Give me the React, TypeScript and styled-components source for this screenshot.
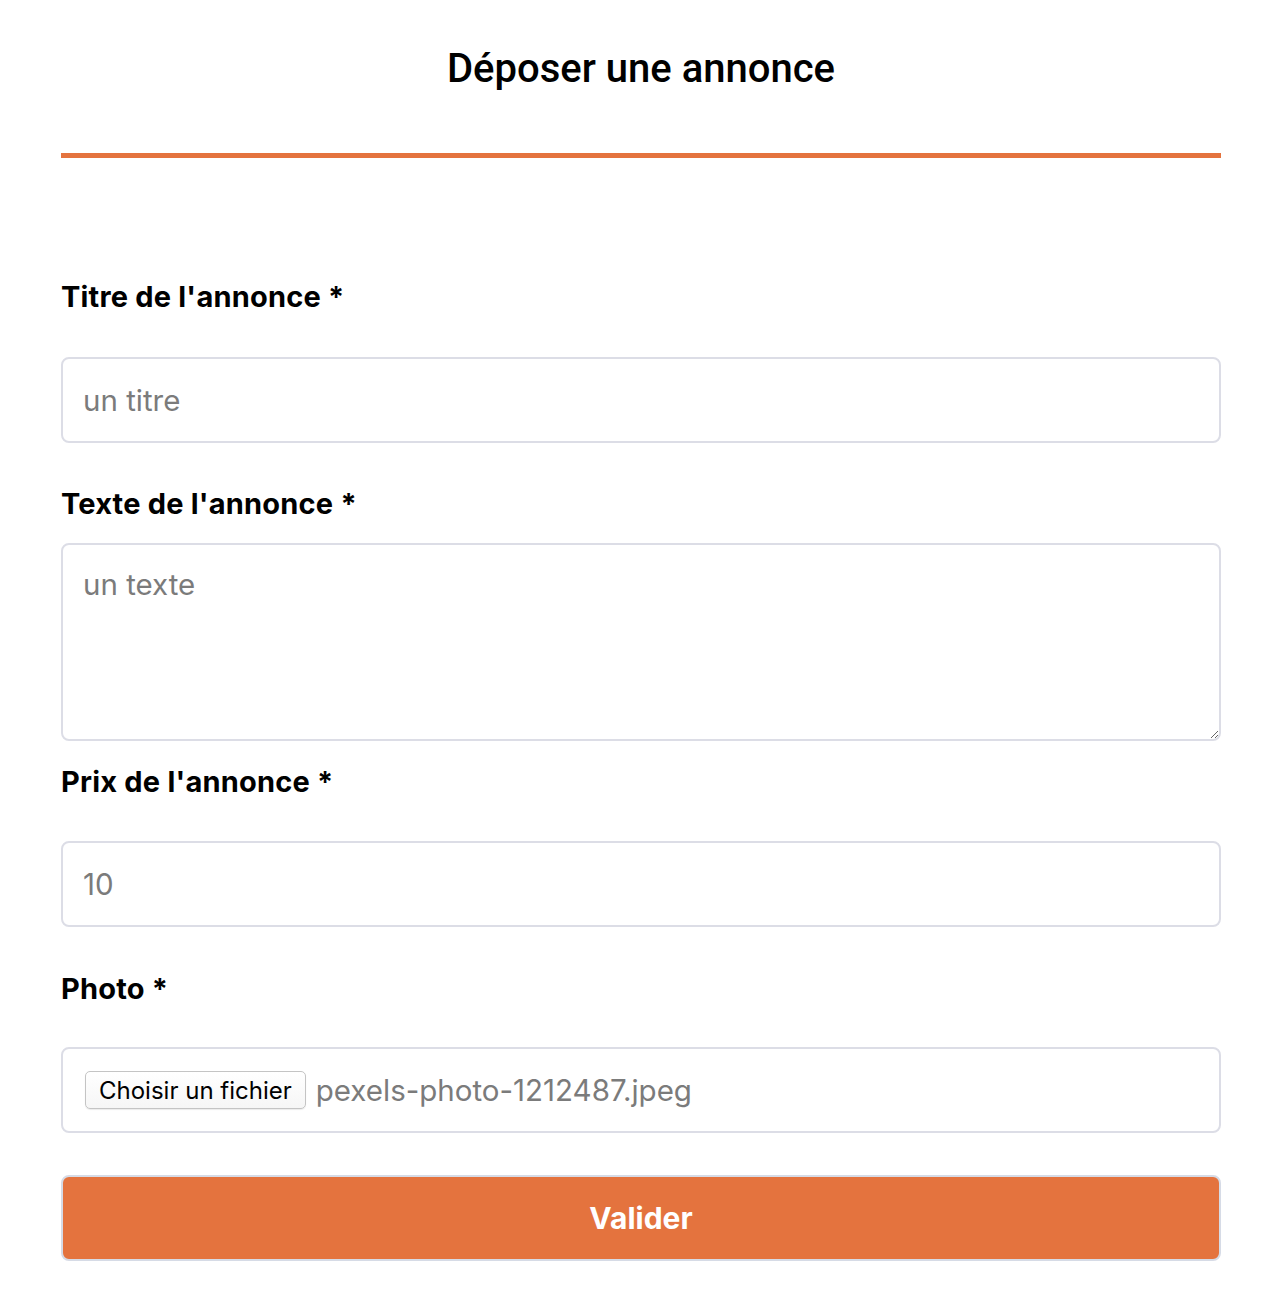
import React from "react";
import styled, { createGlobalStyle } from "styled-components";

const GlobalStyle = createGlobalStyle`
  html, body { margin: 0; padding: 0; background: #ffffff; }
  body { font-family: Inter, "Noto Sans", sans-serif; color: #000; }
  * { box-sizing: border-box; }
`;

const Page = styled.main`
  width: 1160px;
  margin: 0 0 0 61px;
  display: flex;
  flex-direction: column;
`;

const Title = styled.h1`
  margin: 45px 0 0;
  font-family: Roboto, "Noto Sans", sans-serif;
  font-weight: 500;
  font-size: 40px;
  line-height: normal;
  text-align: center;
`;

const Rule = styled.div`
  height: 5px;
  margin-top: 61px;
  background: #e4733e;
`;

const Form = styled.form`
  display: flex;
  flex-direction: column;
  margin-top: 121px;
  padding-bottom: 32px;
`;

const Label = styled.label<{ $after: number; $before: number }>`
  display: block;
  font-family: Inter, "Noto Sans", sans-serif;
  font-weight: 700;
  font-size: 29px;
  line-height: normal;
  letter-spacing: 0.2px;
  margin-top: ${(p) => p.$before}px;
  margin-bottom: ${(p) => p.$after}px;
`;

const fieldBase = `
  width: 100%;
  border: 2px solid #dcdde6;
  border-radius: 8px;
  background: #fff;
  font-family: Inter, "Noto Sans", sans-serif;
  font-size: 29.5px;
  color: #222;
  outline: none;
  &::placeholder { color: #7b7b7b; opacity: 1; }
`;

const TextInput = styled.input`
  ${fieldBase}
  display: block;
  height: 86px;
  padding: 0 20px;
`;

const TextArea = styled.textarea`
  ${fieldBase}
  display: block;
  height: 198px;
  padding: 21px 20px;
  resize: both;
  line-height: normal;
`;

const FileBox = styled.div`
  display: flex;
  align-items: center;
  gap: 10px;
  height: 86px;
  padding: 0 22px;
  border: 2px solid #dcdde6;
  border-radius: 8px;
  background: #fff;
`;

const FileButton = styled.button`
  height: 38px;
  padding: 0 13px;
  font-family: Inter, "Noto Sans", sans-serif;
  font-size: 24px;
  color: #000;
  background: linear-gradient(#ffffff, #f6f6f6);
  border: 1px solid #c4c4c4;
  border-radius: 5px;
  box-shadow: 0 1px 1px rgba(0, 0, 0, 0.08);
  cursor: pointer;
`;

const FileName = styled.span`
  font-family: Inter, "Noto Sans", sans-serif;
  font-size: 29.5px;
  color: #7b7b7b;
`;

const Submit = styled.button`
  margin-top: 42px;
  height: 86px;
  width: 100%;
  border: 2px solid #d6dbe6;
  border-radius: 8px;
  background: #e4733e;
  color: #fff;
  font-family: Inter, "Noto Sans", sans-serif;
  font-weight: 700;
  font-size: 30px;
  cursor: pointer;
`;

export default function App() {
  return (
    <>
      <GlobalStyle />
      <Page>
        <Title>Déposer une annonce</Title>
        <Rule />
        <Form onSubmit={(e) => e.preventDefault()}>
          <Label htmlFor="titre" $before={0} $after={43}>Titre de l'annonce *</Label>
          <TextInput id="titre" placeholder="un titre" />
          <Label htmlFor="texte" $before={43} $after={22}>Texte de l'annonce *</Label>
          <TextArea id="texte" placeholder="un texte" />
          <Label htmlFor="prix" $before={23} $after={42}>Prix de l'annonce *</Label>
          <TextInput id="prix" placeholder="10" />
          <Label $before={44} $after={41}>Photo *</Label>
          <FileBox>
            <FileButton type="button">Choisir un fichier</FileButton>
            <FileName>pexels-photo-1212487.jpeg</FileName>
          </FileBox>
          <Submit type="submit">Valider</Submit>
        </Form>
      </Page>
    </>
  );
}
